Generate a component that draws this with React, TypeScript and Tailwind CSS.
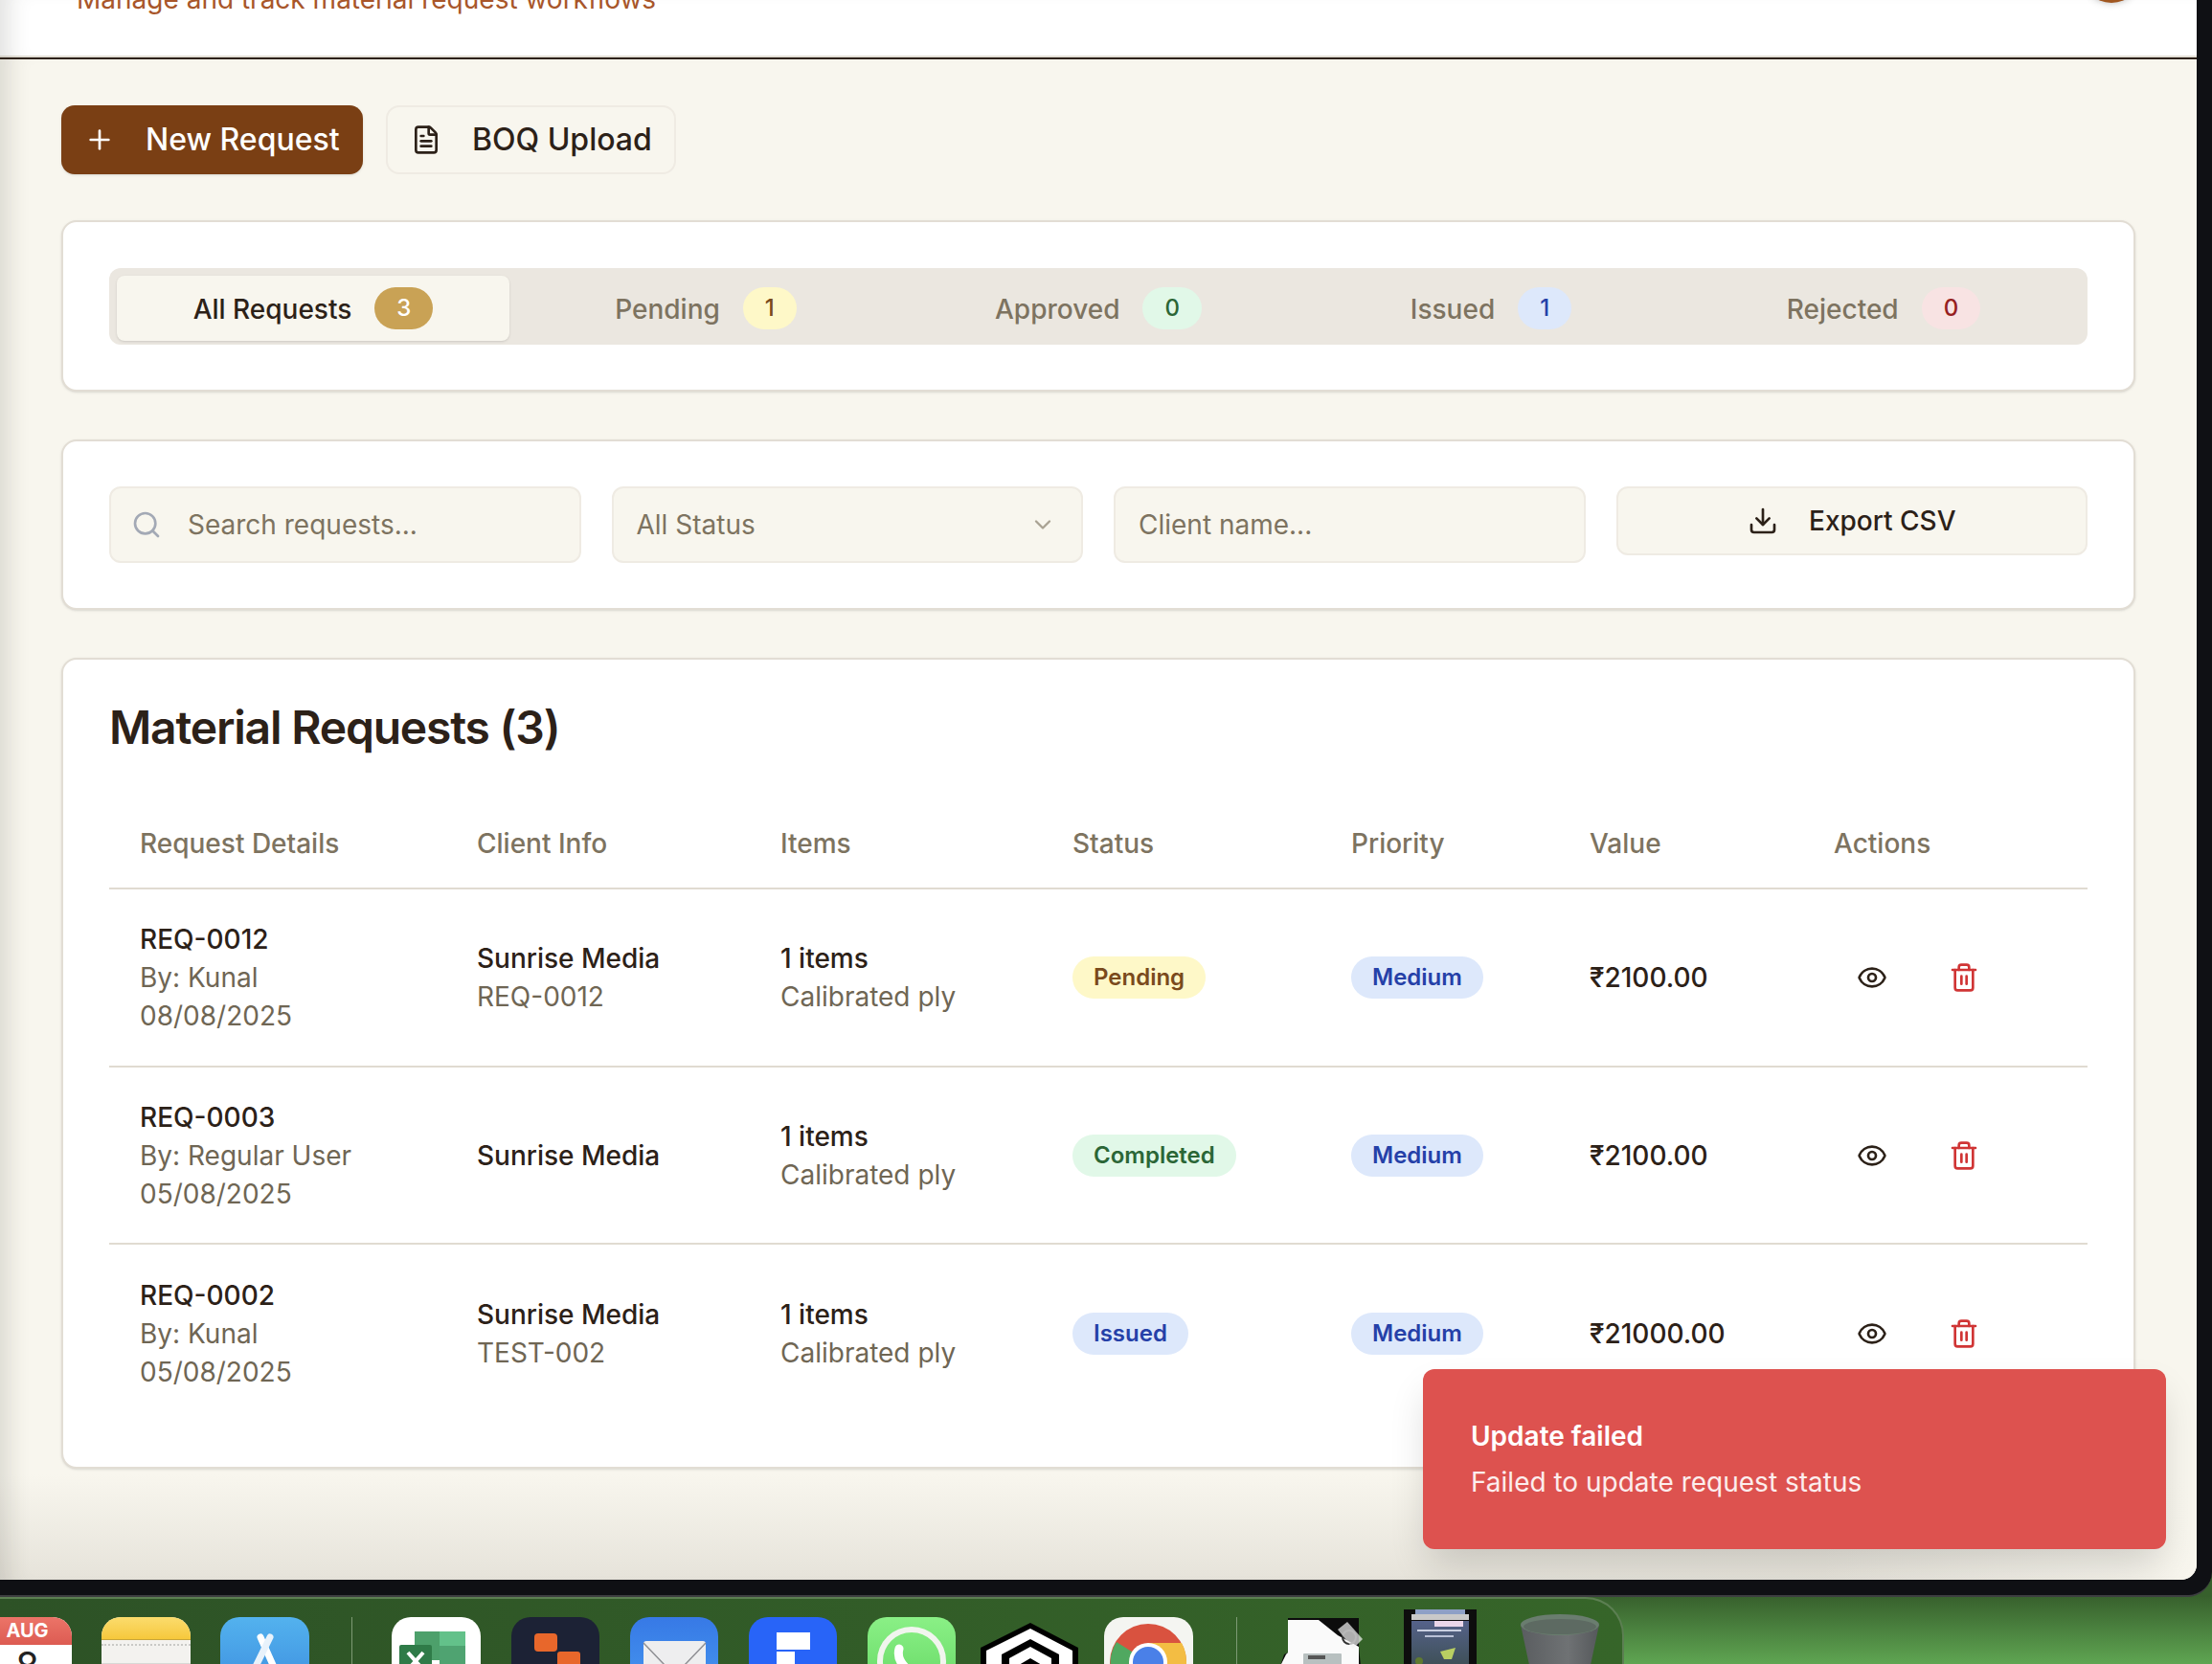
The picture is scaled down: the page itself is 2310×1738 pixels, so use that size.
import React from 'react';
import { ChevronDown, Download, Eye, FileText, Plus, Search, Trash2 } from 'lucide-react';

const tabs = [
  { label: 'All Requests', count: 3, badge: 'bg-[#c9a255] text-white' },
  { label: 'Pending', count: 1, badge: 'bg-[#fef8c8] text-[#7a4a1c]' },
  { label: 'Approved', count: 0, badge: 'bg-[#e1f8e8] text-[#2b6636]' },
  { label: 'Issued', count: 1, badge: 'bg-[#dde8fb] text-[#2540a8]' },
  { label: 'Rejected', count: 0, badge: 'bg-[#f8e3e3] text-[#962020]' },
];

const rows = [
  { id: 'REQ-0012', by: 'By: Kunal', date: '08/08/2025', sub: 'REQ-0012', status: 'Pending', statusClass: 'bg-[#fef8c8] text-[#7a4a1c]', value: '₹2100.00', rowClass: 'h-[186px] border-b-2 border-[#e0dbd1]' },
  { id: 'REQ-0003', by: 'By: Regular User', date: '05/08/2025', sub: '', status: 'Completed', statusClass: 'bg-[#e1f8e8] text-[#2b6636]', value: '₹2100.00', rowClass: 'h-[185px] border-b-2 border-[#e0dbd1]' },
  { id: 'REQ-0002', by: 'By: Kunal', date: '05/08/2025', sub: 'TEST-002', status: 'Issued', statusClass: 'bg-[#dde8fb] text-[#2540a8]', value: '₹21000.00', rowClass: 'h-[186px]' },
];

const headers = ['Request Details', 'Client Info', 'Items', 'Status', 'Priority', 'Value', 'Actions'];

function DockIcons() {
  return (
    <div className="flex items-start pt-[19px] pl-0">
      {/* calendar */}
      <div className="-ml-[18px] w-[93px] h-[93px] rounded-[20px] bg-white overflow-hidden shrink-0">
        <div className="h-[29px] bg-gradient-to-b from-[#ec7468] to-[#dc5b52] text-white font-bold text-[20px] leading-[29px] text-center">AUG</div>
        <div className="text-[#222] text-[40px] leading-[44px] text-center">8</div>
      </div>
      {/* notes */}
      <div className="ml-[31px] w-[93px] h-[93px] rounded-[20px] bg-[#f3f2ef] overflow-hidden shrink-0">
        <div className="h-[24px] bg-gradient-to-b from-[#fbdc6c] to-[#f6c83a] border-b border-[#c8a63a]" />
        <div className="mt-[4px] border-t-2 border-dotted border-[#c9c9c6]" />
        <div className="mt-[18px] h-[2px] bg-[#d8d8d5]" />
      </div>
      {/* app store */}
      <div className="ml-[31px] w-[93px] h-[93px] rounded-[20px] bg-gradient-to-b from-[#53b2ee] to-[#3a87dc] shrink-0">
        <svg viewBox="0 0 93 93" className="w-[93px] h-[93px]">
          <path d="M42 21 L64 70" stroke="#fff" strokeWidth="7" strokeLinecap="round" />
          <path d="M52 21 L28 70" stroke="#e8f2fb" strokeWidth="7" strokeLinecap="round" />
        </svg>
      </div>
      <div className="ml-[44px] w-[1px] h-[60px] bg-[#7d9a74] shrink-0" />
      {/* excel */}
      <div className="ml-[41px] w-[93px] h-[93px] rounded-[20px] bg-white shrink-0">
        <svg viewBox="0 0 93 93" className="w-[93px] h-[93px]">
          <rect x="24" y="15" width="26" height="30" fill="#4da06b" />
          <rect x="50" y="15" width="27" height="15" fill="#63c18a" />
          <rect x="50" y="30" width="27" height="20" fill="#4fa371" />
          <rect x="8" y="29" width="34" height="34" rx="2" fill="#2f7b48" />
          <path d="M17 37 L33 55 M33 37 L17 55" stroke="#fff" strokeWidth="4" />
        </svg>
      </div>
      {/* dark app */}
      <div className="ml-[32px] w-[92px] h-[93px] rounded-[20px] bg-[#1c2235] shrink-0">
        <svg viewBox="0 0 92 93" className="w-[92px] h-[93px]">
          <rect x="24" y="17" width="24" height="19" rx="4" fill="#e8672b" />
          <rect x="48" y="36" width="24" height="19" rx="3" fill="#e8672b" />
        </svg>
      </div>
      {/* mail */}
      <div className="ml-[32px] w-[92px] h-[93px] rounded-[20px] bg-gradient-to-b from-[#3779e6] to-[#4a9cf0] shrink-0">
        <svg viewBox="0 0 92 93" className="w-[92px] h-[93px]">
          <rect x="14" y="25" width="65" height="50" rx="3" fill="#eeeeef" />
          <path d="M14 27 L36 50 M79 27 L57 50" stroke="#8f9094" strokeWidth="1.5" />
        </svg>
      </div>
      {/* blue doc app */}
      <div className="ml-[32px] w-[92px] h-[93px] rounded-[20px] bg-[#2864f8] shrink-0">
        <svg viewBox="0 0 92 93" className="w-[92px] h-[93px]">
          <rect x="29" y="16" width="35" height="18" fill="#fff" />
          <rect x="29" y="36" width="19" height="30" fill="#fff" />
        </svg>
      </div>
      {/* whatsapp */}
      <div className="ml-[32px] w-[92px] h-[93px] rounded-[20px] bg-gradient-to-b from-[#8af086] to-[#5fd45f] shrink-0">
        <svg viewBox="0 0 92 93" className="w-[92px] h-[93px]">
          <circle cx="46" cy="46" r="33" fill="none" stroke="#f1f5ee" strokeWidth="6" />
          <path d="M33 33 Q30 44 40 53" stroke="#fff" strokeWidth="9" fill="none" strokeLinecap="round" />
        </svg>
      </div>
      {/* hex logo */}
      <svg viewBox="0 0 108 45" className="ml-[24px] mt-[5px] w-[108px] h-[45px] shrink-0">
        <path d="M54 1 L104 27 L104 45 L2 45 L2 27 Z" fill="#000" />
        <path d="M54 7 L98 30 L98 45 L84 45 L84 34 L54 18 L24 34 L24 45 L8 45 L8 30 Z" fill="#fff" />
        <path d="M54 26 L76 38 L76 45 L66 45 L54 38 L42 45 L32 45 L32 38 Z" fill="#fff" />
      </svg>
      {/* chrome */}
      <div className="ml-[23px] w-[93px] h-[93px] rounded-[20px] bg-[#f4f5f1] shrink-0">
        <svg viewBox="0 0 93 93" className="w-[93px] h-[93px]">
          <circle cx="46" cy="47" r="40" fill="#d9523f" />
          <path d="M46 47 L13 26 A40 40 0 0 0 10 64 Z" fill="#50a860" />
          <path d="M46 27 L81 27 A40 40 0 0 1 86 47 L86 70 L46 70 Z" fill="#f3bd43" />
          <circle cx="46" cy="47" r="20" fill="#fff" />
          <circle cx="46" cy="47" r="16" fill="#4a80e8" />
        </svg>
      </div>
      <div className="ml-[45px] w-[1px] h-[60px] bg-[#7d9a74] shrink-0" />
      {/* printer file */}
      <svg viewBox="0 0 90 50" className="ml-[45px] mt-[1px] w-[90px] h-[50px] shrink-0">
        <path d="M8 0 L82 0 L82 30 L84 50 L0 50 L4 38 L8 36 Z" fill="#0c0c0c" />
        <path d="M8 2 L40 2 L60 18 L82 30 L82 50 L0 50 L6 38 L8 36 Z" fill="#fafafa" />
        <circle cx="72" cy="20" r="7" fill="none" stroke="#333" strokeWidth="2" />
        <path d="M60 12 L70 4 L86 22 L76 32 Z" fill="#f3f3f3" fillOpacity="0.7" />
        <rect x="24" y="37" width="40" height="13" rx="1" fill="#b8c0c0" />
        <rect x="29" y="39" width="18" height="4" fill="#555" />
      </svg>
      {/* box stack */}
      <div className="ml-[39px] -mt-[8px] w-[76px] h-[58px] bg-[#0d0d0d] shrink-0 flex flex-col items-center">
        <div className="w-[52px] h-[5px] bg-[#8ea0c6]" />
        <div className="w-[60px] h-[6px] bg-[#c9c9c9]" />
        <div className="mt-[1px] w-[60px] h-[46px] bg-gradient-to-b from-[#55628a] to-[#3f5058]">
          <svg viewBox="0 0 60 46" className="w-[60px] h-[46px]">
            <rect x="24" y="0" width="30" height="6" fill="#ead6ea" />
            <rect x="6" y="9" width="46" height="2" fill="#c9cfe0" />
            <rect x="14" y="15" width="30" height="2" fill="#b9c0d6" />
            <path d="M30 32 L46 28 L42 40 L34 40 Z" fill="#b9cf62" />
            <circle cx="8" cy="42" r="4" fill="#5f7a30" />
          </svg>
        </div>
      </div>
      {/* trash */}
      <svg viewBox="0 0 84 54" className="ml-[45px] -mt-[4px] w-[84px] h-[54px] shrink-0">
        <defs>
          <linearGradient id="bin" x1="0" x2="1" y1="0" y2="0">
            <stop offset="0" stopColor="#5a5d60" />
            <stop offset="0.6" stopColor="#6f7274" />
            <stop offset="1" stopColor="#55585b" />
          </linearGradient>
        </defs>
        <path d="M1 12 L10 54 L74 54 L83 12 Z" fill="url(#bin)" />
        <ellipse cx="42" cy="12" rx="41" ry="11" fill="#6a7d6f" />
        <ellipse cx="42" cy="14" rx="38" ry="8" fill="#5d6a62" />
      </svg>
    </div>
  );
}

export default function App() {
  return (
    <div className="w-[2310px] h-[1738px] overflow-hidden font-['Inter',sans-serif] bg-[#37602c]">
      {/* browser frame */}
      <div className="h-[1668px] bg-[#0f1014] border-b-2 border-[#3c3d40] rounded-br-[26px]">
        <div className="relative w-[2294px] h-[1650px] rounded-br-[16px] overflow-hidden flex flex-col">
          <header className="h-[62px] shrink-0 bg-white border-b-2 border-[#2c2118] flex items-start justify-between pl-[80px] pr-[57px] shadow-[inset_26px_0_22px_-16px_rgba(60,60,50,0.14),inset_0_-2px_0_#e5e1d8]">
            <p className="-mt-[21px] text-[28px] leading-[40px] text-[#a8562a]">Manage and track material request workflows</p>
            <div className="-mt-[61px] w-[64px] h-[64px] rounded-full bg-[#a0561f] shadow-md" />
          </header>

          <main className="flex-1 pt-[48px] pl-[64px] pr-[64px] bg-[linear-gradient(to_right,transparent_1900px,#f8f6ee_2290px),linear-gradient(to_top,#e6e3da,#f8f6ee_110px)] shadow-[inset_26px_0_22px_-16px_rgba(60,60,50,0.14)]">
            <div className="flex gap-6 items-start">
              <button className="h-[72px] w-[315px] shrink-0 flex items-center pl-6 gap-8 rounded-[14px] bg-[#7a3f14] text-white text-[32px] font-medium shadow-sm whitespace-nowrap">
                <Plus size={32} strokeWidth={2} />
                New Request
              </button>
              <button className="h-[72px] w-[303px] shrink-0 flex items-center pl-6 gap-8 rounded-[14px] border-2 border-[#efebe3] bg-[#f8f6ee] text-[#2c2118] text-[32px] font-medium whitespace-nowrap">
                <FileText size={32} strokeWidth={2} />
                BOQ Upload
              </button>
            </div>

            <section className="mt-[48px] bg-white border-2 border-[#e2ddd4] rounded-[16px] px-12 pt-12 pb-[47px] shadow-sm">
              <div className="flex h-[80px] rounded-[12px] bg-[#ebe7e0] pt-2 pb-1 px-2">
                {tabs.map((t, i) => (
                  <div
                    key={t.label}
                    className={i === 0
                      ? 'flex-1 flex items-center justify-center gap-6 rounded-[8px] bg-[#f8f6ee] shadow-sm text-[28px] font-medium text-[#2c2118]'
                      : 'flex-1 flex items-center justify-center gap-6 rounded-[8px] text-[28px] font-medium text-[#7d7360]'}
                  >
                    <span className="pt-[2px]">{t.label}</span>
                    <span className={`h-[44px] px-[23px] flex items-center justify-center rounded-full text-[24px] font-medium ${t.badge}`}>{t.count}</span>
                  </div>
                ))}
              </div>
            </section>

            <section className="mt-[50px] bg-white border-2 border-[#e2ddd4] rounded-[16px] px-12 pt-[47px] pb-[47px] shadow-sm">
              <div className="grid grid-cols-4 gap-8 items-start">
                <div className="h-[80px] flex items-center gap-[27px] pl-[21px] rounded-[12px] border-2 border-[#efebe3] bg-[#f8f6ee]">
                  <Search size={32} strokeWidth={2} className="text-[#a3a9b5] shrink-0" />
                  <input placeholder="Search requests..." className="w-full bg-transparent outline-none text-[28px] placeholder:text-[#7d7360]" />
                </div>
                <div className="h-[80px] flex items-center justify-between pl-6 pr-[26px] rounded-[12px] border-2 border-[#efebe3] bg-[#f8f6ee] text-[28px] text-[#7d7360]">
                  All Status
                  <ChevronDown size={28} strokeWidth={2} className="text-[#a9a293]" />
                </div>
                <div className="h-[80px] flex items-center pl-6 rounded-[12px] border-2 border-[#efebe3] bg-[#f8f6ee]">
                  <input placeholder="Client name..." className="w-full bg-transparent outline-none text-[28px] placeholder:text-[#7d7360]" />
                </div>
                <button className="h-[72px] flex items-center justify-center gap-8 rounded-[12px] border-2 border-[#efebe3] bg-[#f8f6ee] text-[28px] font-medium text-[#2c2118]">
                  <Download size={32} strokeWidth={2} />
                  Export CSV
                </button>
              </div>
            </section>

            <section className="mt-[50px] bg-white border-2 border-[#e2ddd4] rounded-[16px] px-12 pt-[49px] pb-[47px] shadow-sm">
              <h2 className="text-[48px] leading-[44px] font-semibold tracking-[-0.025em] text-[#2c2118]">Material Requests (3)</h2>
              <table className="mt-[52px] w-full table-fixed border-collapse text-[28px] leading-[40px] text-left">
                <colgroup>
                  <col className="w-[352px]" />
                  <col className="w-[317px]" />
                  <col className="w-[305px]" />
                  <col className="w-[291px]" />
                  <col className="w-[249px]" />
                  <col className="w-[255px]" />
                  <col />
                </colgroup>
                <thead>
                  <tr className="h-[94px] border-b-2 border-[#e0dbd1]">
                    {headers.map((h) => (
                      <th key={h} className="pl-8 font-medium text-[#7d7360] align-middle">{h}</th>
                    ))}
                  </tr>
                </thead>
                <tbody className="text-[#2c2118]">
                  {rows.map((r) => (
                    <tr key={r.id} className={r.rowClass}>
                      <td className="pl-8">
                        <div className="font-medium">{r.id}</div>
                        <div className="text-[#6f6654]">{r.by}</div>
                        <div className="text-[#6f6654]">{r.date}</div>
                      </td>
                      <td className="pl-8">
                        <div className="font-medium">Sunrise Media</div>
                        {r.sub && <div className="text-[#6f6654]">{r.sub}</div>}
                      </td>
                      <td className="pl-8">
                        <div className="font-medium">1 items</div>
                        <div className="text-[#6f6654]">Calibrated ply</div>
                      </td>
                      <td className="pl-8">
                        <span className={`inline-flex items-center h-[44px] px-[22px] rounded-full text-[24px] font-semibold ${r.statusClass}`}>{r.status}</span>
                      </td>
                      <td className="pl-8">
                        <span className="inline-flex items-center h-[44px] px-[22px] rounded-full text-[24px] font-semibold bg-[#dde8fb] text-[#2540a8]">Medium</span>
                      </td>
                      <td className="pl-8 font-medium">{r.value}</td>
                      <td className="pl-8">
                        <div className="flex gap-4">
                          <button className="w-[80px] h-[64px] flex items-center justify-center text-[#2c2118]"><Eye size={32} strokeWidth={2} /></button>
                          <button className="w-[80px] h-[64px] flex items-center justify-center text-[#d03535]"><Trash2 size={32} strokeWidth={2} /></button>
                        </div>
                      </td>
                    </tr>
                  ))}
                </tbody>
              </table>
            </section>
          </main>

          {/* toast */}
          <div className="absolute left-[1486px] top-[1430px] w-[776px] h-[188px] rounded-[12px] bg-[#dd524f] text-white pl-[50px] pt-[50px] shadow-[0_20px_40px_-6px_rgba(0,0,0,0.16)]">
            <div className="text-[28px] leading-[40px] font-semibold">Update failed</div>
            <div className="mt-[8px] text-[28px] leading-[40px] text-white/90">Failed to update request status</div>
          </div>
        </div>
      </div>

      {/* dock on the wallpaper */}
      <div className="h-[70px] bg-[linear-gradient(to_bottom,#38612d,#5fa552)]">
        <div className="w-[1696px] h-[70px] overflow-hidden rounded-tr-[40px] border-t-2 border-r-2 border-[#5c7f52] bg-gradient-to-r from-[#2d5226] to-[#366529]">
          <DockIcons />
        </div>
      </div>
    </div>
  );
}
